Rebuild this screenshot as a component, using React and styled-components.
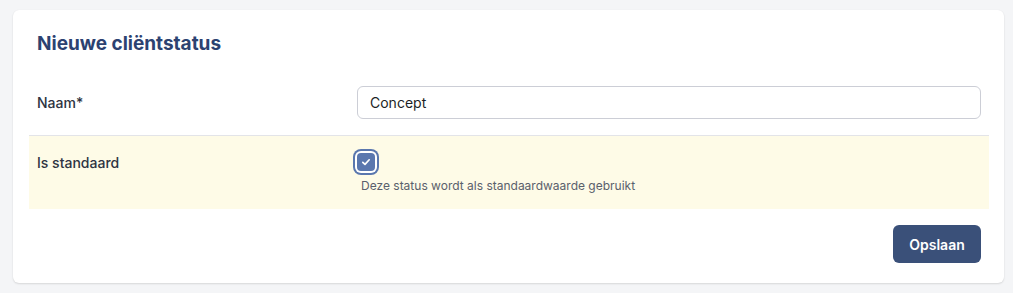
import React, { useState } from 'react'
import styled, { createGlobalStyle } from 'styled-components'

const GlobalStyle = createGlobalStyle`
  body {
    margin: 0;
    background: #f4f5f7;
    font-family: Inter, "Noto Sans", sans-serif;
  }
`

function App() {
  const [name, setName] = useState('Concept')
  const [isDefault, setIsDefault] = useState(true)

  return (
    <Page>
      <GlobalStyle />
      <Card>
        <Title>Nieuwe cliëntstatus</Title>

        <Form>
          <Row>
            <Label>Naam*</Label>
            <Field>
              <Input value={name} onChange={(e) => setName(e.target.value)} />
            </Field>
          </Row>

          <Row highlight>
            <Label top>Is standaard</Label>
            <Field>
              <Check
                type="button"
                checked={isDefault}
                onClick={() => setIsDefault(!isDefault)}
              >
                {isDefault && (
                  <svg width="12" height="12" viewBox="0 0 12 12">
                    <path d="M2.8 6.3l2.2 2.1L9.2 3.8" fill="none" stroke="#fff" strokeWidth="1.7" strokeLinecap="round" strokeLinejoin="round" />
                  </svg>
                )}
              </Check>
              <Help>Deze status wordt als standaardwaarde gebruikt</Help>
            </Field>
          </Row>
        </Form>

        <Footer>
          <SaveButton>Opslaan</SaveButton>
        </Footer>
      </Card>
    </Page>
  )
}

const Page = styled.div`
  padding: 10px 9px 10px 13px;
`

const Card = styled.div`
  background: #fff;
  border-radius: 6px;
  box-shadow: 0 1px 2px rgba(0, 0, 0, 0.12), 0 0 1px rgba(0, 0, 0, 0.06);
  padding: 24px 15px 20px 16px;
`

const Title = styled.h2`
  margin: 0 0 0 8px;
  font-size: 19px;
  line-height: 20px;
  font-weight: 700;
  color: #2c4271;
  height: 36px;
`

const Form = styled.div`
  display: flex;
  flex-direction: column;
`

const Row = styled.div`
  display: grid;
  grid-template-columns: 320px 1fr;
  align-items: ${(p) => (p.highlight ? 'start' : 'center')};
  padding: 16px 8px;
  background: ${(p) => (p.highlight ? '#fefbe7' : 'transparent')};
  & + & {
    border-top: 1px solid #e3e4e8;
  }
`

const Label = styled.div`
  font-size: 14px;
  color: #2e3442;
  font-weight: 500;
  padding-top: ${(p) => (p.top ? '2px' : '0')};
`

const Field = styled.div`
  display: flex;
  flex-direction: column;
  align-items: flex-start;
`

const Input = styled.input`
  box-sizing: border-box;
  width: 100%;
  height: 33px;
  border: 1px solid #ccced6;
  border-radius: 6px;
  padding: 0 12px;
  font: 14px Inter, "Noto Sans", sans-serif;
  color: #1c1f26;
  outline: none;
`

const Check = styled.button`
  box-sizing: border-box;
  width: 18px;
  height: 18px;
  margin: 1px 0 0 0;
  padding: 0;
  border: none;
  border-radius: 4px;
  background: ${(p) => (p.checked ? '#5a77ae' : '#fff')};
  box-shadow: 0 0 0 2px #fff, 0 0 0 4px #5a77ae;
  display: flex;
  align-items: center;
  justify-content: center;
  cursor: pointer;
`

const Help = styled.div`
  margin-top: 7px;
  margin-left: 4px;
  font-size: 12px;
  color: #5a606c;
`

const Footer = styled.div`
  display: flex;
  justify-content: flex-end;
  padding: 16px 8px 0;
`

const SaveButton = styled.button`
  width: 88px;
  height: 38px;
  border: none;
  border-radius: 6px;
  background: #3a5079;
  color: #fff;
  font: 600 14px Inter, "Noto Sans", sans-serif;
  cursor: pointer;
`

export default App
